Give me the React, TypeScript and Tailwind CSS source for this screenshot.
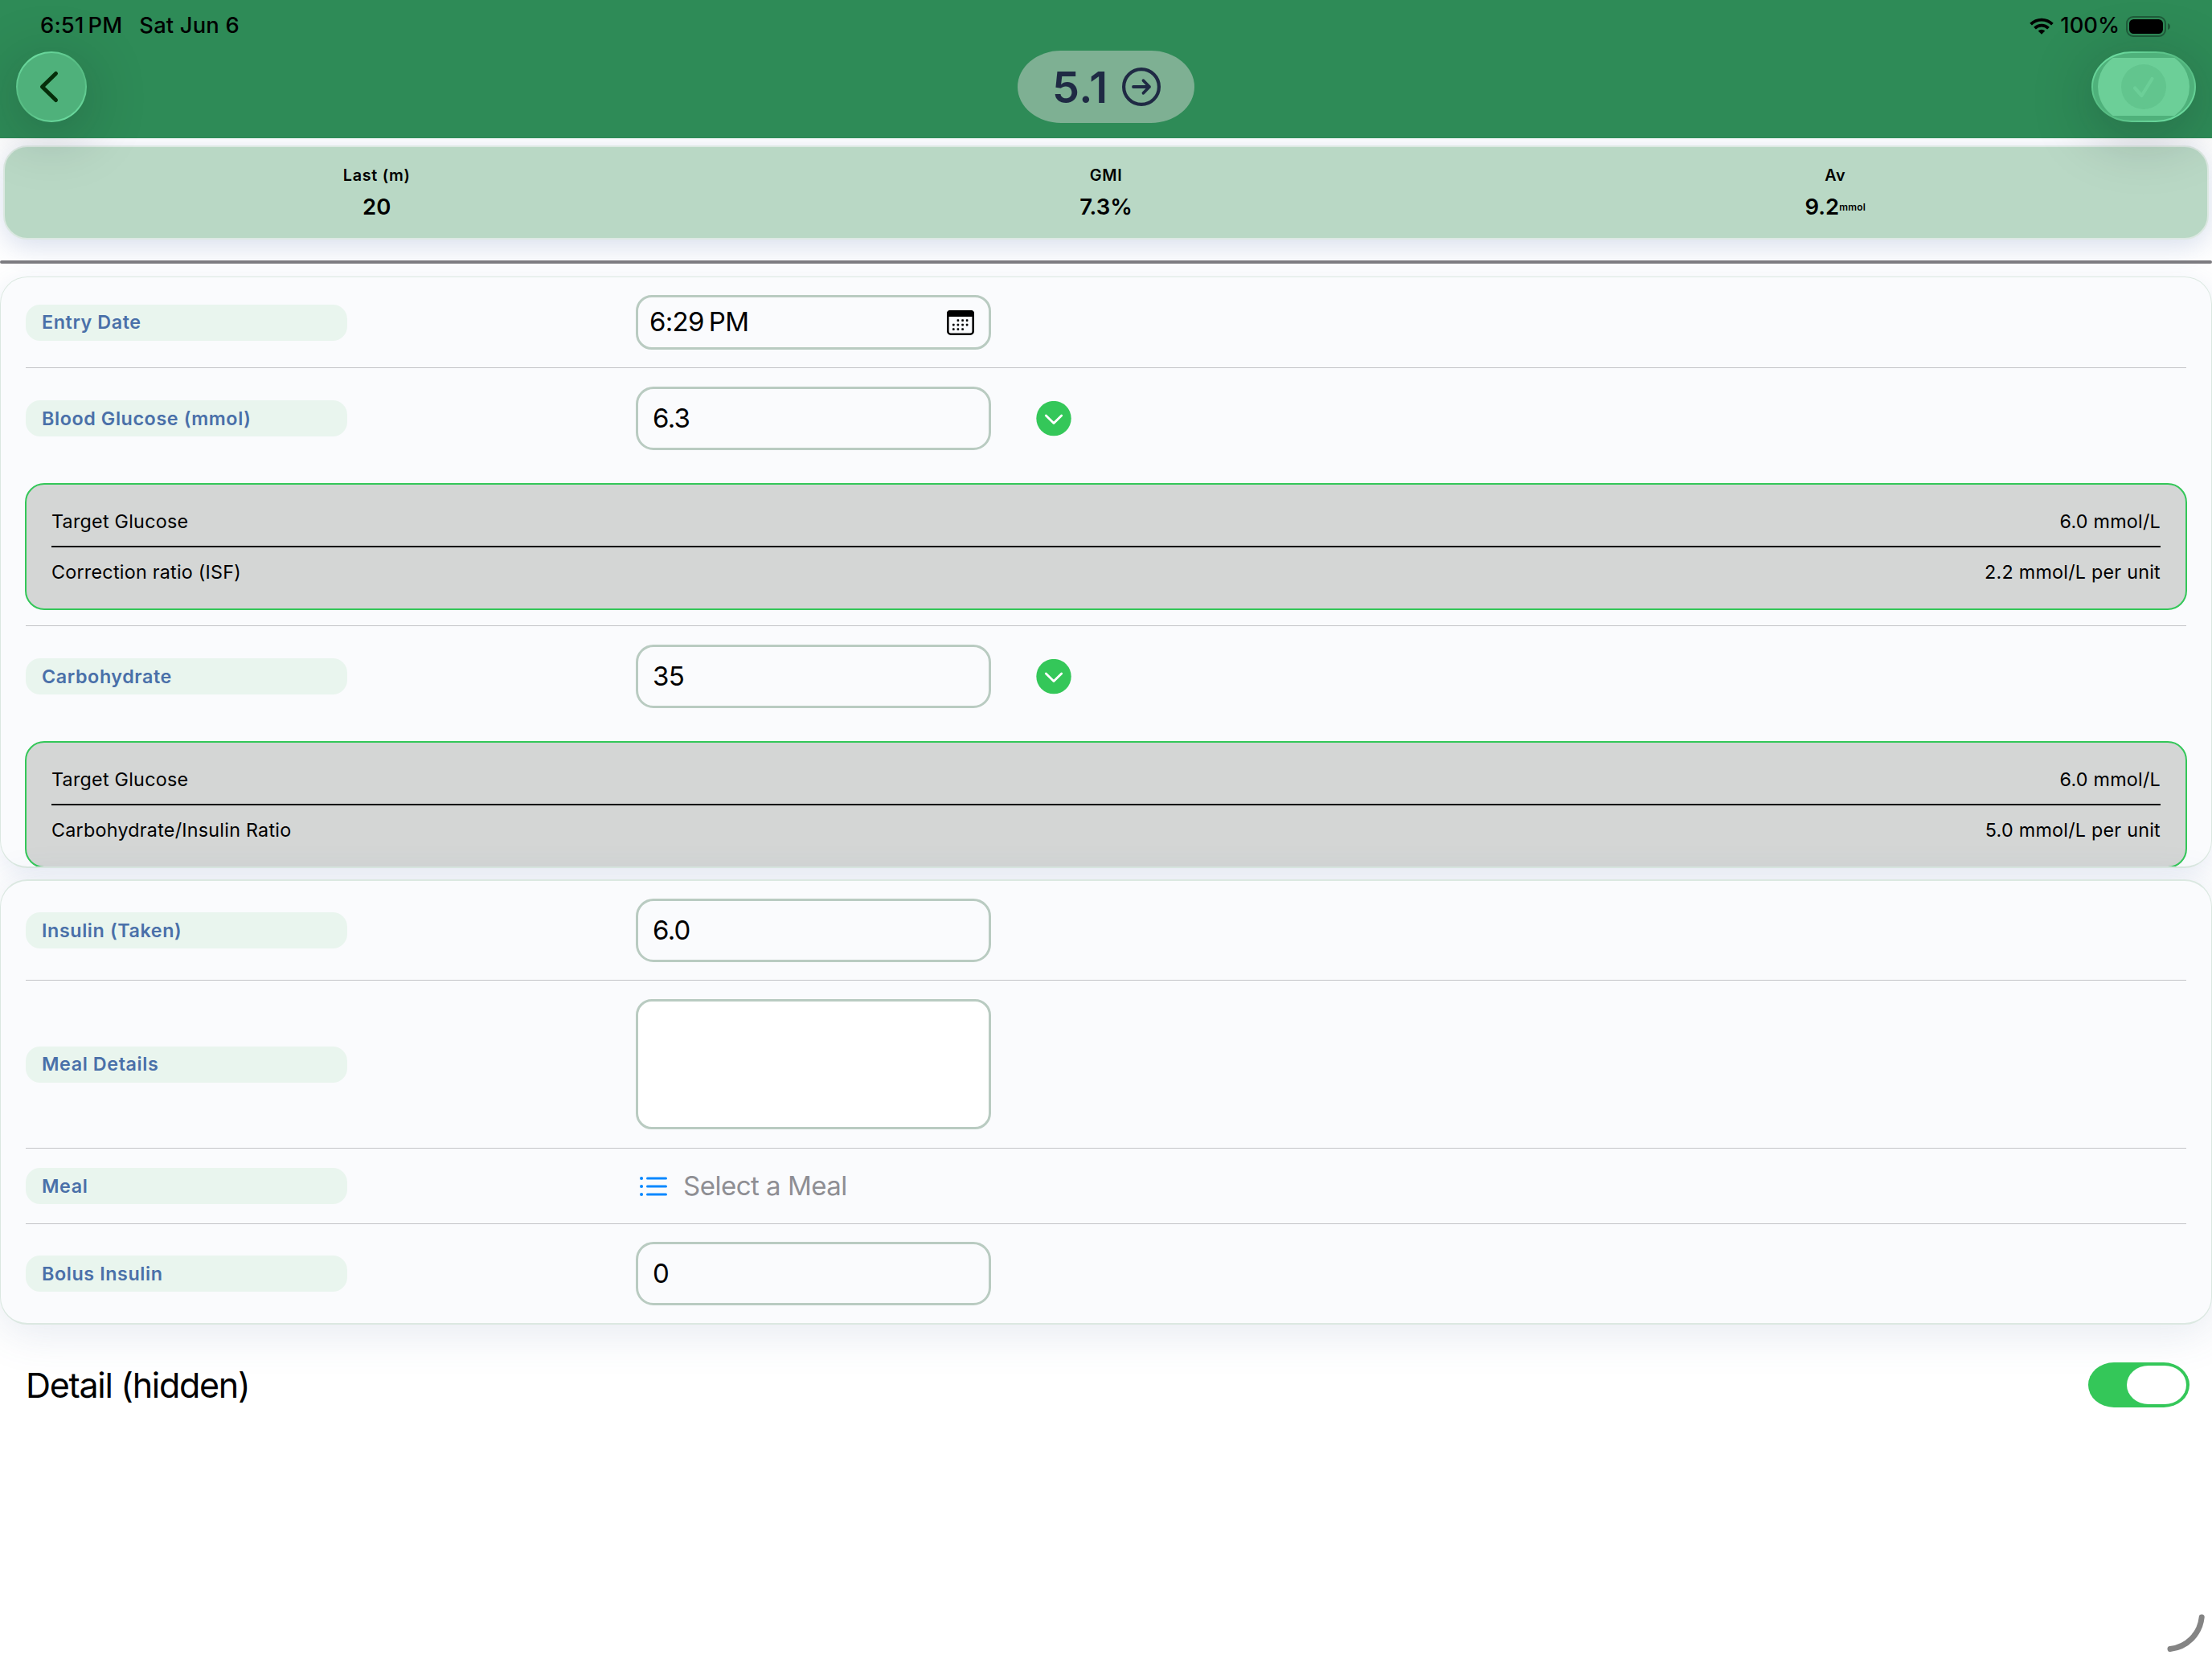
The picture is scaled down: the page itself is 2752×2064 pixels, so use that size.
import React from "react";

const FieldLabel: React.FC<{ text: string }> = ({ text }) => (
    <div className="w-[400px] h-[45px] shrink-0 rounded-[18px] bg-[#e9f5ee] pl-[20px] pt-px flex items-center text-[23.3px] font-semibold tracking-[0.6px] text-[#4a70a9]">
        {text}
    </div>
);

const Row: React.FC<{ label: string; className: string; children?: React.ReactNode }> = ({ label, className, children }) => (
    <div className={`flex items-center ${className}`}>
        <FieldLabel text={label} />
        <div className="ml-[359px] flex items-center">{children}</div>
    </div>
);

const ValueBox: React.FC<{ value: string }> = ({ value }) => (
    <div className="w-[442px] h-[79px] rounded-[22px] border-3 border-[#b9cbc1] pl-[18px] pt-px flex items-center text-[33px] tracking-[-0.7px] text-black">
        {value}
    </div>
);

const ExpandIcon = () => (
    <svg className="ml-[56px] w-[44px] h-[44px]" viewBox="0 0 44 44" fill="none">
        <circle cx="22" cy="21.600" r="21.700" fill="#34c759" />
        <path d="M12.300 18L22 27.600l9.700-9.600" stroke="white" strokeWidth="2.800" strokeLinecap="round" strokeLinejoin="round" />
    </svg>
);

const Divider = () => <div className="h-px mx-[31px] bg-[#c3c4c7]" />;

/**
 * Grey panel under a value with the target and the ratio used
 */
const RatioPanel: React.FC<{ name: string; ratio: string }> = ({ name, ratio }) => (
    <div className="mt-[18px] mx-[30px] h-[158px] rounded-[24px] border-2 border-[#34c759] bg-[#d4d6d5] px-[31px] pt-[14px] text-[23.3px] tracking-[0.25px] text-black">
        <div className="h-[62px] pt-[2px] flex items-center justify-between">
            <span>Target Glucose</span>
            <span>6.0 mmol/L</span>
        </div>
        <div className="h-[2px] bg-black" />
        <div className="h-[61px] pt-[2px] flex items-center justify-between">
            <span>{name}</span>
            <span>{ratio}</span>
        </div>
    </div>
);

const Stat: React.FC<{ title: string; value: string; unit?: string }> = ({ title, value, unit }) => (
    <div className="flex-1 flex flex-col items-center text-black">
        <div className="mt-[22px] h-[26px] leading-[26px] text-[19.8px] font-semibold tracking-[0.7px]">{title}</div>
        <div className="mt-[9px] h-[36px] flex items-center text-[27.5px] font-semibold">
            {value}
            {unit && <span className="text-[12px] font-semibold leading-none tracking-[0.2px]">{unit}</span>}
        </div>
    </div>
);

const StatusBar = () => (
    <div className="h-[64px] flex justify-between text-[27.3px] font-medium text-black">
        <div className="ml-[50px] h-[65px] flex items-center">
            <span className="tracking-[0.2px]">6:51<span className="ml-[5px]">PM</span></span>
            <span className="ml-[21px] tracking-[0.2px]">Sat Jun 6</span>
        </div>
        <div className="mr-[51px] h-[65px] flex items-center">
            <svg className="w-[30px] h-[22px]" viewBox="0 0 30 22" fill="none" stroke="black" strokeWidth="3.800">
                <path d="M1.600 8.200a19 19 0 0 1 26.800 0" />
                <path d="M6.500 13.100a12 12 0 0 1 17 0" />
                <path d="M15 20.800l-4.300-4.200a6.200 6.200 0 0 1 8.600 0z" fill="black" stroke="none" />
            </svg>
            <span className="ml-[8px]">100%</span>
            <svg className="ml-[8px] w-[56px] h-[26px]" viewBox="0 0 56 26" fill="none">
                <rect x="1" y="1" width="48" height="24" rx="8" stroke="#1f5c3a" strokeWidth="2" />
                <rect x="4" y="4" width="42" height="18" rx="5.500" fill="black" />
                <path d="M52 9c4 1.200 4 6.800 0 8z" fill="#1f5c3a" />
            </svg>
        </div>
    </div>
);

const Header = () => (
    <div className="relative z-10 h-[172px] bg-[#2e8b57]">
        <StatusBar />
        <div className="flex justify-between pl-[20px] pr-[20px]">
            <div className="w-[130px]">
                <div className="w-[88px] h-[88px] rounded-full p-[2px] bg-[linear-gradient(150deg,#74e6aa,#58be85_40%,#58be85_60%,#74e6aa)] shadow-[0_14px_76px_rgba(20,20,30,0.26)]">
                    <div className="w-full h-full rounded-full bg-[#4fb17b]">
                        <svg className="w-[84px] h-[84px]" viewBox="0 0 84 84" fill="none">
                            <path d="M47.500 25.500L30.500 42l17 16.500" stroke="#062d0a" strokeWidth="5" strokeLinecap="round" strokeLinejoin="round" />
                        </svg>
                    </div>
                </div>
            </div>

            <div className="-mt-px w-[220px] h-[90px] rounded-[54px/45px] bg-[#7eb093] flex items-center text-[#1f2a44]">
                <span className="ml-[43px] w-[69px] text-[54px] font-semibold tracking-[0.6px]">5.1</span>
                <svg className="ml-[18px] w-[48px] h-[48px]" viewBox="0 0 48 48" fill="none" stroke="currentColor" strokeLinecap="round" strokeLinejoin="round">
                    <circle cx="24" cy="24" r="21.900" strokeWidth="4.200" />
                    <path d="M14 24h20M26.500 16.200L34 24l-7.500 7.800" strokeWidth="3.800" />
                </svg>
            </div>

            <div className="w-[130px] h-[88px] rounded-[50px/44px] p-[2px] bg-[linear-gradient(150deg,#74e6aa,#58be85_40%,#58be85_60%,#74e6aa)] shadow-[0_14px_76px_rgba(20,20,30,0.26)]">
                <div className="w-full h-full rounded-[48px/42px] bg-[#4fb17b] flex items-center justify-center">
                    <div className="w-[114px] h-[72px] overflow-hidden flex items-center">
                        <div className="w-[114px] h-[88px] shrink-0 rounded-[44px] bg-[#6ccf98] flex items-center justify-center">
                            <svg className="w-[56px] h-[56px]" viewBox="0 0 56 56" fill="none">
                                <circle cx="28" cy="28" r="28" fill="#62c58e" />
                                <path d="M17 29.500l8.500 9.500L38.500 18" stroke="#6ccf98" strokeWidth="4.200" strokeLinecap="round" strokeLinejoin="round" />
                            </svg>
                        </div>
                    </div>
                </div>
            </div>
        </div>
    </div>
);

const CalendarIcon = () => (
    <svg className="w-[34px] h-[31px]" viewBox="0 0 34 31">
        <rect x="1.300" y="1.300" width="31.400" height="28.400" rx="3.500" fill="none" stroke="black" strokeWidth="2.600" />
        <path d="M0 8V4a4 4 0 0 1 4-4h26a4 4 0 0 1 4 4v4z" fill="black" />
        {[12.500, 18, 23.500].map((y, row) =>
            [8.200, 13.800, 19.500, 25].map((x, col) => {
                if ((row === 0 && col === 0) || (row === 2 && col === 3)) return null;
                return <rect key={`${row}-${col}`} x={x - 1.200} y={y - 1.200} width="2.600" height="2.600" rx="0.600" fill="black" />;
            })
        )}
    </svg>
);

export default function App() {
    return (
        <div className="relative w-[2752px] h-[2064px] overflow-hidden bg-white font-['Inter','Liberation_Sans',sans-serif]">
            <Header />

            <div className="mt-[9px] mx-[4px] h-[117px] rounded-[30px] border-2 border-[#dce8e2] bg-[#b9d8c5] flex px-[9px] shadow-[0_8px_34px_rgba(70,100,170,0.22)]">
                <Stat title="Last (m)" value="20" />
                <Stat title="GMI" value="7.3%" />
                <Stat title="Av" value="9.2" unit="mmol" />
            </div>

            <div className="relative mt-[26px] h-[4px] rounded-full bg-[#7c7b80]" />

            <div className="mt-[16px] h-[736px] rounded-[34px] shadow-[0_8px_34px_rgba(70,100,170,0.13)]">
                <div className="h-full overflow-hidden rounded-[34px] border border-b-2 border-[#dbe8e1] bg-[#fafbfd]">
                    <Row label="Entry Date" className="h-[112px] pl-[31px]">
                        <div className="w-[442px] h-[68px] rounded-[20px] border-3 border-[#b9cbc1] pl-[14px] pr-[18px] flex items-center justify-between text-[33px] text-black">
                            <span className="tracking-[-0.700px]">6:29<span className="ml-[6px]">PM</span></span>
                            <CalendarIcon />
                        </div>
                    </Row>
                    <Divider />
                    <Row label="Blood Glucose (mmol)" className="h-[125px] pl-[31px]">
                        <ValueBox value="6.3" />
                        <ExpandIcon />
                    </Row>
                    <RatioPanel name="Correction ratio (ISF)" ratio="2.2 mmol/L per unit" />
                    <div className="mt-[19px]">
                        <Divider />
                    </div>
                    <Row label="Carbohydrate" className="h-[125px] pl-[31px]">
                        <ValueBox value="35" />
                        <ExpandIcon />
                    </Row>
                    <RatioPanel name="Carbohydrate/Insulin Ratio" ratio="5.0 mmol/L per unit" />
                </div>
            </div>

            <div className="relative mt-[14px] h-[554px] rounded-[34px] border border-y-2 border-[#dbe8e1] bg-[#fafbfd] shadow-[0_10px_56px_rgba(70,100,150,0.14)]">
                <Row label="Insulin (Taken)" className="h-[123px] pl-[31px]">
                    <ValueBox value="6.0" />
                </Row>
                <Divider />
                <Row label="Meal Details" className="h-[208px] pl-[31px]">
                    <div className="w-[442px] h-[162px] rounded-[20px] border-3 border-[#b9cbc1] bg-white" />
                </Row>
                <Divider />
                <Row label="Meal" className="h-[93px] pl-[31px]">
                    <svg className="ml-[4px] w-[36px] h-[28px]" viewBox="0 0 36 28" fill="none" stroke="#0a88ff" strokeWidth="3" strokeLinecap="round">
                        <path d="M10.500 4h23M10.500 14h23M10.500 24h23" />
                        <path d="M3 4h.1M3 14h.1M3 24h.1" strokeWidth="4" />
                    </svg>
                    <span className="ml-[19px] text-[33px] tracking-[-0.500px] text-[#8e8e93]">Select a Meal</span>
                </Row>
                <Divider />
                <Row label="Bolus Insulin" className="h-[123px] pl-[31px]">
                    <ValueBox value="0" />
                </Row>
            </div>

            <div className="relative mt-[47px] h-[56px] pl-[32px] pr-[28px] flex items-center justify-between">
                <span className="text-[43px] tracking-[-1.300px] text-black">Detail (hidden)</span>
                <div className="w-[126px] h-[56px] rounded-[32px/28px] bg-[#34c759] p-[4px] flex justify-end">
                    <div className="w-[74px] h-[48px] rounded-[27px/24px] bg-white" />
                </div>
            </div>

            {/* resize handle in the window corner */}
            <svg className="absolute right-0 bottom-0 w-[72px] h-[72px]" viewBox="0 0 72 72" fill="none">
                <path d="M20 59.500C41 57 57 41 59.200 20" stroke="#848484" strokeWidth="7" strokeLinecap="round" />
            </svg>
        </div>
    );
}
